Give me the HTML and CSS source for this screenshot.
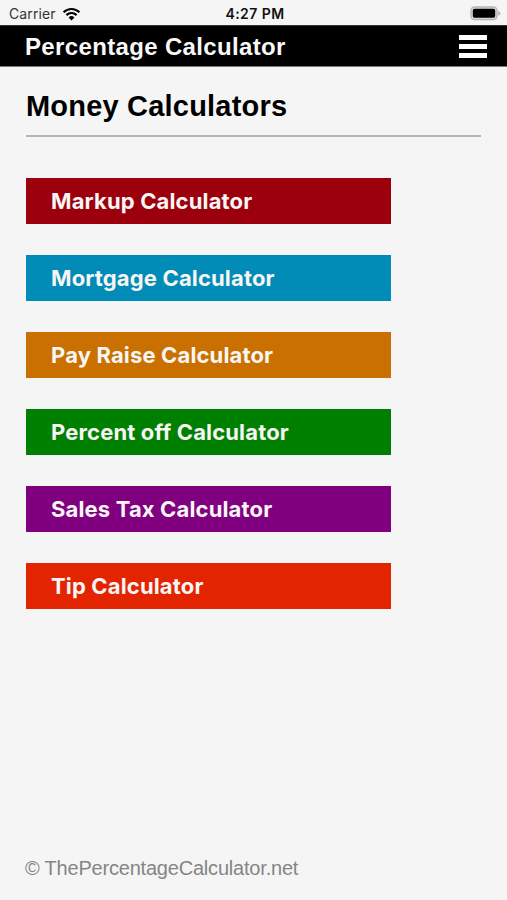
FILE: index.html
```html
<!DOCTYPE html>
<html lang="en">

<head>
    <meta charset="UTF-8">
    <title>Percentage Calculator</title>
    <link rel="stylesheet" href="styles.css">
</head>

<body>
    <div class="status">
        <div class="carrier">
            <span>Carrier</span>
            <svg class="wifi" width="19" height="14" viewBox="0 0 18 14">
                <path d="M1.1 5.2a11.3 11.3 0 0 1 15.8 0M3.9 8.1a7.3 7.3 0 0 1 10.2 0" fill="none" stroke="#000" stroke-width="2.2"/>
                <path d="M6.1 10.4a4.2 4.2 0 0 1 5.8 0L9 13.4z"/>
            </svg>
        </div>
        <span class="time">4:27 PM</span>
        <div class="power">
            <svg width="31" height="15" viewBox="0 0 31 15">
                <rect x="1" y="1" width="26" height="12.6" rx="3.6" fill="#d8d8d8" stroke="#b5b5b5" stroke-width="1.4"/>
                <rect x="2.8" y="2.8" width="22.4" height="9" rx="1.8"/>
                <path d="M28.2 4.8q2.2 1 2.2 2.5t-2.2 2.5z" fill="#b5b5b5"/>
            </svg>
        </div>
    </div>

    <header class="topbar">
        <span class="brand">Percentage Calculator</span>
        <div class="menu"><i></i><i></i><i></i></div>
    </header>

    <main>
        <h1>Money Calculators</h1>
        <nav class="links">
            <a class="markup">Markup Calculator</a>
            <a class="mortgage">Mortgage Calculator</a>
            <a class="raise">Pay Raise Calculator</a>
            <a class="percent">Percent off Calculator</a>
            <a class="tax">Sales Tax Calculator</a>
            <a class="tip">Tip Calculator</a>
        </nav>
    </main>

    <footer>© ThePercentageCalculator.net</footer>
</body>

</html>
```
FILE: styles.css
```css
* {
    box-sizing: border-box;
}

body {
    margin: 0;
    height: 900px;
    display: flex;
    flex-direction: column;
    overflow: hidden;
    background-color: #f5f5f5;
    color: #000;
    font-family: "Liberation Sans", Arial, sans-serif;
}

.status {
    display: grid;
    grid-template-columns: 1fr auto 1fr;
    align-items: center;
    height: 25px;
    padding: 2px 6px 0 9px;
    font-family: Inter, sans-serif;
    font-size: 14px;
}

.carrier {
    display: flex;
    align-items: center;
    gap: 6px;
    color: #333;
    letter-spacing: 0.1px;
}

.time {
    font-weight: 600;
    color: #111;
    letter-spacing: 0.45px;
}

.power {
    display: flex;
    justify-content: flex-end;
}

.topbar {
    display: flex;
    align-items: center;
    justify-content: space-between;
    height: 42px;
    padding: 0 20px 0 25px;
    background-color: #000;
    border-top: 1px solid #333;
    border-bottom: 1px solid #777;
}

.brand {
    padding-top: 1px;
    color: #f8f8f8;
    font-size: 24px;
    font-weight: bold;
    letter-spacing: 0.35px;
}

.menu {
    display: grid;
    gap: 4px;
}

.menu i {
    width: 28px;
    height: 5px;
    background-color: #fff;
}

main {
    flex: 1;
    padding: 20px 26px 0;
}

h1 {
    margin: 0;
    height: 50px;
    border-bottom: 2px solid #b4b4b4;
    font-size: 29px;
    line-height: 38px;
    letter-spacing: 0.2px;
}

.links {
    display: grid;
    gap: 31px;
    padding-top: 41px;
}

.links a {
    width: 365px;
    height: 46px;
    padding-left: 25px;
    color: #f8f5f5;
    font-family: Inter, sans-serif;
    font-size: 22px;
    font-weight: 650;
    line-height: 47px;
    letter-spacing: 0.15px;
}

.markup {
    background-color: #9d000d;
}

.mortgage {
    background-color: #008cb6;
}

.raise {
    background-color: #ca7000;
}

.percent {
    background-color: #008000;
}

.tax {
    background-color: #800080;
}

.tip {
    background-color: #e22400;
}

footer {
    padding: 0 25px 20px;
    color: #858585;
    font-size: 20px;
    line-height: 24px;
    letter-spacing: -0.2px;
}
```
